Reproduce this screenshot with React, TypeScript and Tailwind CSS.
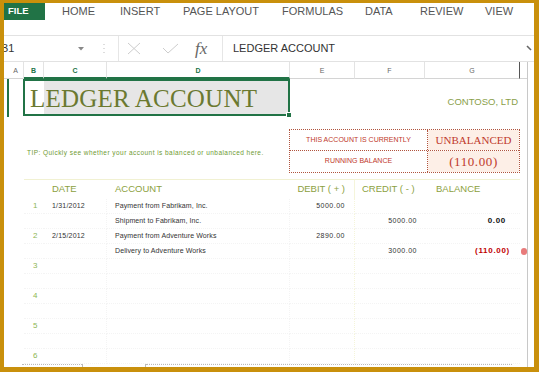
import React from "react";

type R = {
  num?: string;
  date?: string;
  acct?: string;
  debit?: string;
  credit?: string;
  bal?: string;
  red?: boolean;
  dot?: boolean;
};

const rows: R[] = [
  { num: "1", date: "1/31/2012", acct: "Payment from Fabrikam, Inc.", debit: "5000.00" },
  { acct: "Shipment to Fabrikam, Inc.", credit: "5000.00", bal: "0.00" },
  { num: "2", date: "2/15/2012", acct: "Payment from Adventure Works", debit: "2890.00" },
  { acct: "Delivery to Adventure Works", credit: "3000.00", bal: "(110.00)", red: true, dot: true },
  { num: "3" },
  {},
  { num: "4" },
  {},
  { num: "5" },
  {},
  { num: "6" },
];

function DataRow({ r }: { r: R }) {
  return (
    <div className="flex h-[15px] text-[7px] text-[#333]">
      <div className="w-[20px] h-full" />
      <div className="w-[20px] h-full flex items-center pl-[9px] text-[8px] text-[#8db653] border-b border-dotted border-[#f4f4f4]">
        {r.num}
      </div>
      <div className="w-[63px] h-full flex items-center pl-[8px] tracking-[0.2px] border-b border-r border-dotted border-[#f4f4f4]">
        {r.date}
      </div>
      <div className="w-[183px] h-full flex items-center pl-[8px] tracking-[0.1px] border-b border-r border-dotted border-[#f4f4f4]">
        {r.acct}
      </div>
      <div className="w-[65px] h-full flex items-center justify-end pr-[9px] tracking-[0.5px] border-b border-dotted border-b-[#f4f4f4] border-r border-r-[#f5f5da]">
        {r.debit}
      </div>
      <div className="w-[70px] h-full flex items-center justify-end pr-[8px] tracking-[0.5px] border-b border-dotted border-[#f4f4f4]">
        {r.credit}
      </div>
      <div
        className={
          r.red
            ? "w-[95px] h-full flex items-center justify-end pr-[10px] text-[8px] font-bold tracking-[0.7px] text-[#c00000] border-b border-dotted border-[#f4f4f4]"
            : "w-[95px] h-full flex items-center justify-end pr-[14px] text-[8px] font-bold tracking-[0.7px] text-[#111] border-b border-dotted border-[#f4f4f4]"
        }
      >
        {r.bal}
      </div>
      <div className="w-[7px] h-full flex items-center">
        {r.dot ? <div className="ml-[1px] w-[7px] h-[7px] rounded-full bg-[#e87b7b]" /> : null}
      </div>
    </div>
  );
}

export default function App() {
  return (
    <div className="w-[539px] h-[372px] bg-[#c9900c] pt-[3px] pl-[4px] pr-[5px] pb-[5px] overflow-hidden font-['Liberation_Sans',Arial,sans-serif]">
      <div className="w-[530px] h-[364px] bg-white flex flex-col overflow-hidden">
        {/* ribbon tabs */}
        <div className="flex h-[17px] items-center text-[11px] text-[#555]">
          <div className="w-[41px] h-full bg-[#217346] text-white font-bold text-[9.5px] flex items-center pl-[4px]">
            FILE
          </div>
          <div className="w-[17px]" />
          <div className="w-[58px]">HOME</div>
          <div className="w-[63px]">INSERT</div>
          <div className="w-[99px]">PAGE LAYOUT</div>
          <div className="w-[83px]">FORMULAS</div>
          <div className="w-[55px]">DATA</div>
          <div className="w-[65px]">REVIEW</div>
          <div>VIEW</div>
        </div>
        <div className="h-[15px]" />
        {/* formula bar */}
        <div className="flex h-[27px] items-center border-y border-[#e2e2e2] text-[11px] text-[#333]">
          <div className="w-[91px] h-full flex items-center justify-between pr-[11px]">
            <span className="-ml-[3px]">B1</span>
            <svg width="6" height="4" viewBox="0 0 6 4">
              <path d="M0 0 L6 0 L3 3.5 Z" fill="#888" />
            </svg>
          </div>
          <div className="w-[23px] h-full flex items-center pl-[8px]">
            <svg width="2" height="9" viewBox="0 0 2 9">
              <rect x="0.5" y="0" width="1" height="1" fill="#bbb" />
              <rect x="0.5" y="4" width="1" height="1" fill="#bbb" />
              <rect x="0.5" y="8" width="1" height="1" fill="#bbb" />
            </svg>
          </div>
          <div className="w-[104px] h-full flex items-center border-l border-[#e6e6e6] pl-[8px]">
            <svg width="14" height="13" viewBox="0 0 14 13">
              <path d="M1 1 L13 12 M13 1 L1 12" stroke="#cdcdcd" strokeWidth="1" fill="none" />
            </svg>
            <div className="w-[21px]" />
            <svg width="17" height="11" viewBox="0 0 17 11">
              <path d="M1 5 L6 10 L16 1" stroke="#cdcdcd" strokeWidth="1" fill="none" />
            </svg>
            <div className="w-[16px]" />
            <span className="font-['Liberation_Serif',serif] italic text-[17px] text-[#666] leading-none">
              fx
            </span>
          </div>
          <div className="flex-1 h-full flex items-center border-l border-[#e6e6e6] pl-[10px]">
            LEDGER ACCOUNT
          </div>
          <div className="w-[8px] h-full flex items-center">
            <svg width="8" height="7" viewBox="0 0 8 7">
              <path d="M1 1 L5 5" stroke="#666" strokeWidth="1.6" fill="none" />
            </svg>
          </div>
        </div>

        {/* sheet */}
        <div className="flex flex-1">
          <div className="w-[523px] flex flex-col">
            {/* column headers */}
            <div className="flex h-[17px] text-[7px] text-[#666]">
              <div className="w-[20px] h-full flex items-end justify-center pb-[2px] pl-[4px] border-b border-[#d4d4d4] border-r border-r-[#e3e3e3]">
                A
              </div>
              <div className="w-[20px] h-full flex items-end justify-center pb-[1px] border-b-2 border-[#217346] text-[#217346] font-bold border-r border-r-[#e3e3e3]">
                B
              </div>
              <div className="w-[63px] h-full flex items-end justify-center pb-[1px] border-b-2 border-[#217346] text-[#217346] font-bold border-r border-r-[#e3e3e3]">
                C
              </div>
              <div className="w-[183px] h-full flex items-end justify-center pb-[1px] border-b-2 border-[#217346] text-[#217346] font-bold border-r border-r-[#e3e3e3]">
                D
              </div>
              <div className="w-[65px] h-full flex items-end justify-center pb-[2px] border-b border-[#d4d4d4] border-r border-r-[#e3e3e3]">
                E
              </div>
              <div className="w-[70px] h-full flex items-end justify-center pb-[2px] border-b border-[#d4d4d4] border-r border-r-[#e3e3e3]">
                F
              </div>
              <div className="w-[95px] h-full flex items-end justify-center pb-[2px] border-b border-[#d4d4d4] border-r border-r-[#555]">
                G
              </div>
              <div className="w-[7px] h-full border-b border-[#d4d4d4]" />
            </div>

            {/* row 1: title */}
            <div className="flex h-[38px]">
              <div className="w-[19px] h-full flex">
                <div className="ml-[3px] w-[2px] h-full bg-[#217346]" />
              </div>
              <div className="relative w-[267px] h-[37px] border-2 border-[#217346] bg-[linear-gradient(to_right,#ffffff_19px,#e6e6e6_19px)] flex items-center pl-[5px] pt-[3px]">
                <span className="font-['Liberation_Serif',serif] text-[25px] tracking-[0.2px] leading-[30px] text-[#6b7930] whitespace-nowrap">
                  LEDGER ACCOUNT
                </span>
                <div className="absolute -right-[4px] -bottom-[4px] w-[6px] h-[6px] bg-[#217346] border border-white" />
              </div>
              <div className="w-[230px] h-full flex items-end justify-end pr-[2px] pb-[8px] text-[9.5px] text-[#8aa04a] font-light">
                CONTOSO, LTD
              </div>
              <div className="w-[7px]" />
            </div>

            <div className="h-[12px]" />

            {/* status box */}
            <div className="flex h-[44px]">
              <div className="w-[285px] pl-[23px] pt-[20px] text-[6.5px] tracking-[0.45px] text-[#6f9a33] whitespace-nowrap leading-[8px]">
                TIP: Quickly see whether your account is balanced or unbalanced here.
              </div>
              <div className="w-[231px] h-full border border-dotted border-[#b0543e] flex flex-col">
                <div className="flex h-[21px] border-b border-dotted border-[#b0543e]">
                  <div className="w-[138px] h-full flex items-center justify-center border-r border-dotted border-[#b0543e] text-[7px] text-[#c0392b]">
                    THIS ACCOUNT IS CURRENTLY
                  </div>
                  <div className="flex-1 h-full flex items-center justify-center bg-[#fdefe7] font-['Liberation_Serif',serif] text-[11px] text-[#c0392b]">
                    UNBALANCED
                  </div>
                </div>
                <div className="flex flex-1">
                  <div className="w-[138px] h-full flex items-center justify-center border-r border-dotted border-[#b0543e] text-[7px] text-[#c0392b]">
                    RUNNING BALANCE
                  </div>
                  <div className="flex-1 h-full flex items-center justify-center bg-[#fdefe7] font-['Liberation_Serif',serif] text-[13px] tracking-[0.6px] text-[#c0392b]">
                    (110.00)
                  </div>
                </div>
              </div>
              <div className="w-[7px]" />
            </div>

            <div className="h-[6px]" />

            {/* table header */}
            <div className="flex h-[20px] text-[9.5px] text-[#8c9f3e]">
              <div className="w-[20px] h-full" />
              <div className="w-[20px] h-full border-t border-[#f1f1d2]" />
              <div className="w-[63px] h-full flex items-center pl-[8px] border-t border-[#f1f1d2]">DATE</div>
              <div className="w-[183px] h-full flex items-center pl-[8px] border-t border-[#f1f1d2]">ACCOUNT</div>
              <div className="w-[65px] h-full flex items-center justify-end pr-[9px] border-t border-[#f1f1d2] border-r border-r-[#f5f5da] whitespace-nowrap">
                DEBIT ( + )
              </div>
              <div className="w-[70px] h-full flex items-center pl-[7px] border-t border-[#f1f1d2] whitespace-nowrap">
                CREDIT ( - )
              </div>
              <div className="w-[95px] h-full flex items-center pl-[11px] border-t border-[#f1f1d2]">BALANCE</div>
              <div className="w-[7px]" />
            </div>

            {rows.map((r, i) => (
              <DataRow key={i} r={r} />
            ))}

            {/* bottom bar */}
            <div className="flex h-[3px]">
              <div className="w-[18px]" />
              <div className="w-[60px] border-t border-dotted border-[#bbbbbb]" />
              <div className="w-[1px] bg-[#bbbbbb]" />
              <div className="w-[62px]" />
              <div className="w-[1px] bg-[#bbbbbb]" />
              <div className="w-[366px] border-t border-dotted border-[#bbbbbb]" />
            </div>
          </div>
          <div className="w-[7px] border-l border-[#c8c8c8]" />
        </div>
      </div>
    </div>
  );
}
